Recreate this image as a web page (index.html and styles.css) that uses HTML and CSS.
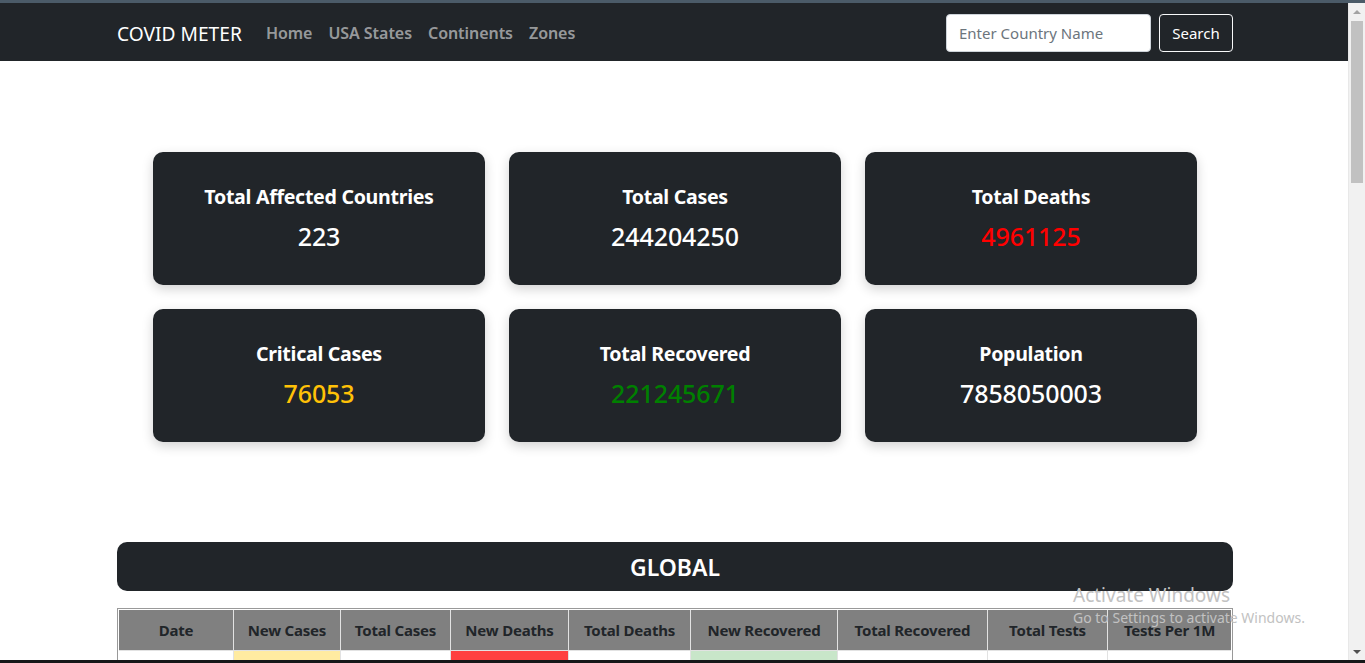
FILE: index.html
```html
<!DOCTYPE html>
<html lang="en">
<head>
<meta charset="utf-8">
<title>COVID METER</title>
<link rel="stylesheet" href="styles.css">
</head>
<body>
<div class="chrome-top"></div>
<div class="window">
  <div class="page">
    <nav class="navbar">
      <div class="container nav-inner">
        <div class="nav-left">
          <a class="brand" href="#">COVID METER</a>
          <ul class="nav-links">
            <li><a href="#">Home</a></li>
            <li><a href="#">USA States</a></li>
            <li><a href="#">Continents</a></li>
            <li><a href="#">Zones</a></li>
          </ul>
        </div>
        <form class="search">
          <input class="search-input" type="text" placeholder="Enter Country Name">
          <button class="search-btn" type="button">Search</button>
        </form>
      </div>
    </nav>

    <main class="container main">
      <section class="cards">
        <div class="card"><h3 class="card-title">Total Affected Countries</h3><p class="card-value">223</p></div>
        <div class="card"><h3 class="card-title">Total Cases</h3><p class="card-value">244204250</p></div>
        <div class="card"><h3 class="card-title">Total Deaths</h3><p class="card-value red">4961125</p></div>
        <div class="card"><h3 class="card-title">Critical Cases</h3><p class="card-value yellow">76053</p></div>
        <div class="card"><h3 class="card-title">Total Recovered</h3><p class="card-value green">221245671</p></div>
        <div class="card"><h3 class="card-title">Population</h3><p class="card-value">7858050003</p></div>
      </section>

      <h2 class="global">GLOBAL</h2>

      <table class="stats">
        <colgroup>
          <col class="c1"><col class="c2"><col class="c3"><col class="c4"><col class="c5"><col class="c6"><col class="c7"><col class="c8"><col class="c9">
        </colgroup>
        <thead>
          <tr>
            <th>Date</th><th>New Cases</th><th>Total Cases</th><th>New Deaths</th><th>Total Deaths</th><th>New Recovered</th><th>Total Recovered</th><th>Total Tests</th><th>Tests Per 1M</th>
          </tr>
        </thead>
        <tbody>
          <tr>
            <td>&nbsp;</td><td class="bg-yellow">&nbsp;</td><td>&nbsp;</td><td class="bg-red">&nbsp;</td><td>&nbsp;</td><td class="bg-green">&nbsp;</td><td>&nbsp;</td><td>&nbsp;</td><td>&nbsp;</td>
          </tr>
        </tbody>
      </table>
    </main>
  </div>
  <div class="scrollbar">
    <div class="sb-arrow sb-up"></div>
    <div class="sb-track"><div class="sb-thumb"></div></div>
    <div class="sb-arrow sb-down"></div>
  </div>
  <div class="watermark">
    <div class="wm-title">Activate Windows</div>
    <div class="wm-sub">Go to Settings to activate Windows.</div>
  </div>
</div>
<div class="chrome-bottom"></div>
</body>
</html>
```

FILE: styles.css
```css
* { box-sizing: border-box; }

html, body {
  margin: 0;
  padding: 0;
  height: 663px;
  overflow: hidden;
  background: #fff;
  font-family: "Noto Sans", "Open Sans", sans-serif;
  color: #212529;
}

.chrome-top {
  height: 3px;
  background: #4b5b68;
}

.chrome-bottom {
  height: 3px;
  background: #151718;
}

.window {
  position: relative;
  display: flex;
  height: 657px;
}

.page {
  flex: 1;
  overflow: hidden;
}

.container {
  width: 1140px;
  padding: 0 12px;
  margin-left: calc(50% - 569px);
}

/* navbar */
.navbar {
  background: #212529;
  height: 58px;
}

.nav-inner {
  display: flex;
  align-items: center;
  justify-content: space-between;
  height: 58px;
  padding-top: 2px;
}

.nav-left {
  display: flex;
  align-items: center;
}

.brand {
  color: #fff;
  text-decoration: none;
  font-size: 19.2px;
  margin-right: 16px;
}

.nav-links {
  display: flex;
  list-style: none;
  margin: 0;
  padding: 0;
}

.nav-links a {
  display: block;
  padding: 8px;
  color: rgba(255, 255, 255, 0.55);
  text-decoration: none;
  font-weight: 600;
  font-size: 16px;
  letter-spacing: -0.05px;
}

.search {
  display: flex;
  align-items: center;
  gap: 8px;
}

.search-input {
  width: 205px;
  height: 38px;
  border: 1px solid #ced4da;
  border-radius: 4px;
  padding: 6px 12px;
  font-family: inherit;
  font-size: 15px;
  color: #212529;
  background: #fff;
}

.search-input::placeholder {
  color: #6c757d;
}

.search-btn {
  height: 38px;
  width: 74px;
  background: transparent;
  border: 1px solid #f8f9fa;
  border-radius: 4px;
  color: #fff;
  font-family: inherit;
  font-size: 15px;
  padding: 0;
}

/* cards */
.main {
  padding-top: 91px;
}

.cards {
  width: 1044px;
  margin: 0 auto;
  display: grid;
  grid-template-columns: repeat(3, 332px);
  gap: 24px;
}

.card {
  background: #212529;
  border-radius: 10px;
  height: 133px;
  box-shadow: 0 4px 12px rgba(0, 0, 0, 0.18);
  color: #fff;
  text-align: center;
  padding-top: 31px;
}

.card-title {
  margin: 0;
  font-size: 19.6px;
  font-weight: 700;
  line-height: 28px;
  letter-spacing: -0.3px;
}

.card-value {
  margin: 10px 0 0;
  font-size: 25px;
  font-weight: 500;
  line-height: 30px;
  letter-spacing: -0.1px;
}

.red { color: #ff0000; }
.yellow { color: #ffc107; }
.green { color: #008000; }

/* global header */
.global {
  margin: 100px 0 0;
  background: #212529;
  color: #fff;
  border-radius: 10px;
  height: 49px;
  line-height: 50px;
  text-align: center;
  font-size: 23px;
  font-weight: 600;
}

/* table */
.stats {
  margin-top: 17px;
  width: 1116px;
  border-collapse: separate;
  border-spacing: 0;
  border: 1px solid #999;
  padding: 1px;
  table-layout: fixed;
}

.c1 { width: 115px; }
.c2 { width: 107px; }
.c3 { width: 110px; }
.c4 { width: 118px; }
.c5 { width: 122px; }
.c6 { width: 147px; }
.c7 { width: 150px; }
.c8 { width: 120px; }
.c9 { width: 123px; }

.stats th {
  background: #808080;
  color: #212529;
  font-size: 15px;
  font-weight: 700;
  height: 41px;
  padding: 0;
  text-align: center;
  border-right: 1px solid #e2e2e2;
  border-bottom: 1px solid #e2e2e2;
  white-space: nowrap;
  letter-spacing: -0.2px;
}

.stats th:last-child,
.stats td:last-child {
  border-right: 0;
}

.stats td {
  height: 40px;
  border-right: 1px solid #e2e2e2;
  background: #fff;
}

.stats td.bg-yellow { background: #ffeba1; }
.stats td.bg-red { background: #ff4040; }
.stats td.bg-green { background: #c8e6c9; }

/* fake scrollbar */
.scrollbar {
  width: 17px;
  background: #f1f1f1;
  display: flex;
  flex-direction: column;
  border-left: 1px solid #e8e8e8;
}

.sb-arrow {
  height: 17px;
  display: flex;
  align-items: center;
  justify-content: center;
}

.sb-up::before {
  content: "";
  border-left: 4px solid transparent;
  border-right: 4px solid transparent;
  border-bottom: 4px solid #a3a3a3;
}

.sb-down::before {
  content: "";
  border-left: 4px solid transparent;
  border-right: 4px solid transparent;
  border-top: 4px solid #505050;
}

.sb-track {
  flex: 1;
  padding: 0 2px;
}

.sb-thumb {
  height: 162px;
  margin-top: 1px;
  background: #c1c1c1;
}

/* windows watermark */
.watermark {
  position: absolute;
  left: 1073px;
  top: 581px;
  color: #c2c2c2;
  font-family: "Noto Sans", sans-serif;
  pointer-events: none;
}

.wm-title {
  font-size: 19px;
  line-height: 22px;
}

.wm-sub {
  font-size: 14px;
  line-height: 22px;
  margin-top: 1px;
}
```
